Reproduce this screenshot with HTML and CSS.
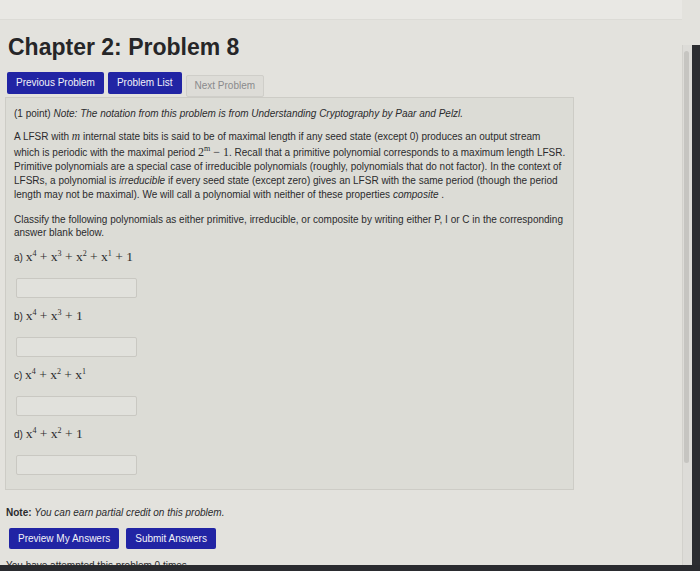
FILE: index.html
```html
<!DOCTYPE html>
<html>
<head>
<meta charset="utf-8">
<link rel="stylesheet" href="styles.css">
</head>
<body>
<div class="screen">
  <div class="page">
    <div class="topband"></div>
    <div class="content">
      <h1 class="title">Chapter 2: Problem 8</h1>
      <div class="nav">
        <span class="btn">Previous Problem</span>
        <span class="btn">Problem List</span>
        <span class="btn disabled">Next Problem</span>
      </div>
      <div class="problem">
        <p class="intro">(1 point) <i>Note: The notation from this problem is from Understanding Cryptography by Paar and Pelzl.</i></p>
        <p class="para">A LFSR with <i class="var">m</i> internal state bits is said to be of maximal length if any seed state (except 0) produces an output stream which is periodic with the maximal period <span class="math">2<sup>m</sup> &minus; 1</span>. Recall that a primitive polynomial corresponds to a maximum length LFSR. Primitive polynomials are a special case of irreducible polynomials (roughly, polynomials that do not factor). In the context of LFSRs, a polynomial is <i>irreducible</i> if every seed state (except zero) gives an LFSR with the same period (though the period length may not be maximal). We will call a polynomial with neither of these properties <i>composite</i> .</p>
        <p class="para classify">Classify the following polynomials as either primitive, irreducible, or composite by writing either P, I or C in the corresponding answer blank below.</p>
        <div class="item">
          <div class="label">a) <span class="math">x<sup>4</sup> + x<sup>3</sup> + x<sup>2</sup> + x<sup>1</sup> + 1</span></div>
          <div class="answer"></div>
        </div>
        <div class="item">
          <div class="label">b) <span class="math">x<sup>4</sup> + x<sup>3</sup> + 1</span></div>
          <div class="answer"></div>
        </div>
        <div class="item">
          <div class="label">c) <span class="math">x<sup>4</sup> + x<sup>2</sup> + x<sup>1</sup></span></div>
          <div class="answer"></div>
        </div>
        <div class="item">
          <div class="label">d) <span class="math">x<sup>4</sup> + x<sup>2</sup> + 1</span></div>
          <div class="answer"></div>
        </div>
      </div>
      <p class="note"><b>Note:</b> <i>You can earn partial credit on this problem.</i></p>
      <div class="actions">
        <span class="btn">Preview My Answers</span>
        <span class="btn">Submit Answers</span>
      </div>
      <p class="attempts">You have attempted this problem 0 times.</p>
    </div>
  </div>
  <div class="scroll"><div class="thumb"></div></div>
  <div class="bezel"></div>
</div>
<div class="bottombar"></div>
</body>
</html>
```

FILE: styles.css
```css
html, body {
  margin: 0;
  padding: 0;
}
body {
  width: 700px;
  height: 571px;
  overflow: hidden;
  background: #e3e2dd;
  font-family: "Liberation Sans", Arial, sans-serif;
  color: #2b2b2d;
  position: relative;
}
.screen {
  display: flex;
  height: 571px;
}
.page {
  flex: 1;
  display: flex;
  flex-direction: column;
  min-width: 0;
  overflow: hidden;
}
.topband {
  flex-shrink: 0;
  height: 19px;
  background: #e9e8e4;
  border-bottom: 1px solid #dcdbd6;
}
.content {
  flex-shrink: 0;
  padding-left: 6px;
  width: 568px;
}
.title {
  margin: 12px 0 0 2px;
  font-size: 23px;
  line-height: 30px;
  font-weight: bold;
  color: #262628;
}
.nav {
  display: flex;
  gap: 4px;
  margin-top: 10px;
  margin-left: 1px;
}
.btn {
  display: inline-block;
  background: #2124a4;
  color: #f2f2f8;
  font-size: 10px;
  line-height: 22px;
  height: 22px;
  padding: 0 9px;
  border-radius: 2px;
}
.btn.disabled {
  background: #dddcd7;
  color: #8a8a8c;
  border: 1px solid #cfcec9;
  height: 20px;
  line-height: 20px;
  margin-top: 3px;
  padding: 0 8px;
}
.problem {
  margin-top: 0;
  margin-left: -1px;
  background: #dcdcd6;
  border: 1px solid #cdccc6;
  padding: 9px 6px 14px 8px;
  font-size: 10px;
  line-height: 14.3px;
}
.problem p {
  margin: 0;
}
.para {
  margin-top: 8px !important;
}
.classify {
  margin-top: 10px !important;
  line-height: 13px;
}
.var {
  font-family: "Liberation Serif", serif;
  font-size: 11.5px;
}
.math {
  font-family: "Liberation Serif", "Times New Roman", serif;
  font-size: 13.5px;
}
.para .math {
  font-size: 12px;
}
.math sup {
  font-size: 8px;
  vertical-align: 5px;
  line-height: 0;
}
.item {
  display: flex;
  flex-direction: column;
}
.label {
  height: 14px;
  line-height: 14px;
  margin-top: 11px;
}
.item:first-of-type .label {
  margin-top: 11px;
}
.answer {
  width: 119px;
  height: 18px;
  margin-top: 14px;
  margin-left: 2px;
  background: #e1e1dc;
  border: 1px solid #c9c8c2;
  border-radius: 2px;
}
.note {
  margin: 16px 0 0 0;
  font-size: 10px;
  line-height: 14px;
}
.actions {
  display: flex;
  gap: 7px;
  margin-top: 8px;
  margin-left: 3px;
}
.actions .btn {
  font-size: 10px;
  height: 21px;
  line-height: 21px;
}
.attempts {
  margin: 10px 0 0 0;
  font-size: 10px;
  line-height: 14px;
}
.scroll {
  width: 9px;
  margin-top: 45px;
  background: #dddcd8;
  border-left: 1px solid #d2d1cc;
}
.thumb {
  margin: 6px 3px 0 1px;
  height: 412px;
  background: #c6c5c1;
  border-radius: 3px;
}
.bezel {
  width: 8px;
  margin-top: 45px;
  background: #2c2d31;
}
.bottombar {
  position: absolute;
  left: 0;
  right: 0;
  bottom: 0;
  height: 6px;
  background: #2a2b2f;
}
```
